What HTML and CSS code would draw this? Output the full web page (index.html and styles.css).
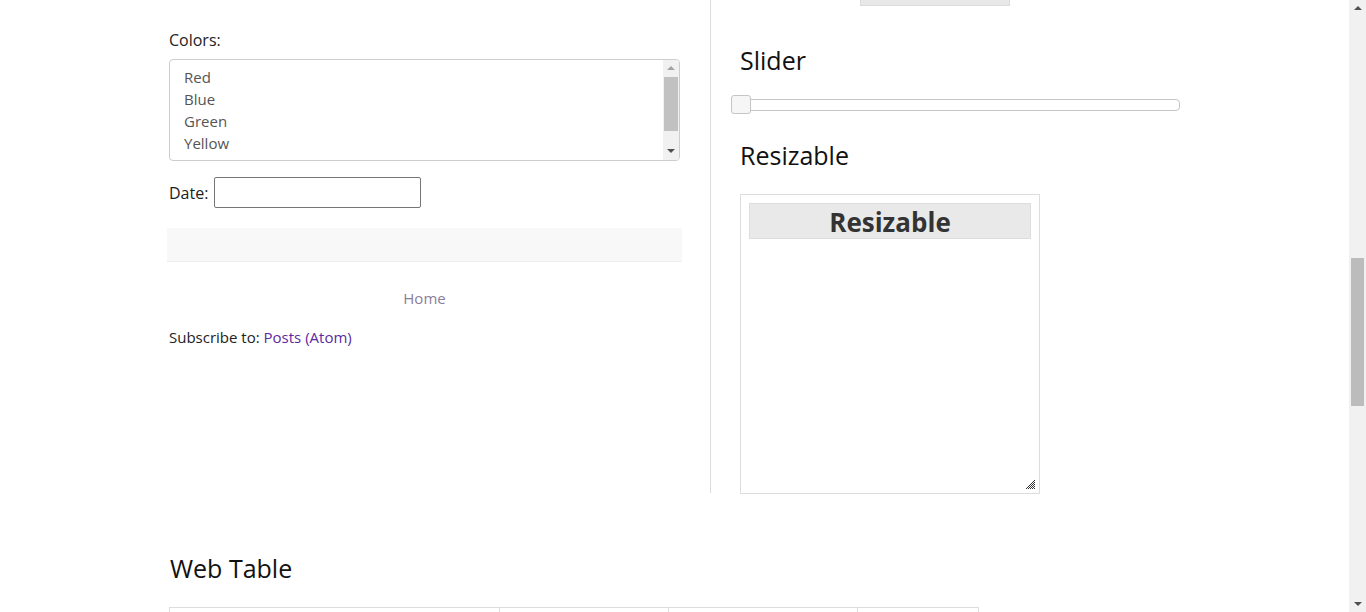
FILE: index.html
```html
<!DOCTYPE html>
<html>
<head>
<meta charset="utf-8">
<link rel="stylesheet" href="styles.css">
</head>
<body>
<div class="page">
  <div class="columns">
    <div class="left">
      <div class="field-label">Colors:</div>
      <div class="listbox">
        <ul class="options">
          <li>Red</li>
          <li>Blue</li>
          <li>Green</li>
          <li>Yellow</li>
          <li>White</li>
        </ul>
        <div class="list-scroll">
          <span class="arrow-up"></span>
          <span class="list-thumb"></span>
          <span class="arrow-down"></span>
        </div>
      </div>
      <div class="date-row">
        <label class="field-label">Date:</label>
        <input class="date-input" type="text">
      </div>
      <div class="band"></div>
      <div class="home-row"><a class="home-link" href="#">Home</a></div>
      <div class="subscribe">Subscribe to: <a class="feed-link" href="#">Posts (Atom)</a></div>
    </div>
    <div class="right">
      <div class="top-stub"></div>
      <h2 class="section-title">Slider</h2>
      <div class="slider">
        <span class="slider-handle"></span>
      </div>
      <h2 class="section-title">Resizable</h2>
      <div class="resizable">
        <h3 class="resizable-header">Resizable</h3>
        <div class="resizable-body"></div>
        <svg class="resize-grip" width="9" height="9" viewBox="0 0 9 9">
          <g fill="#333">
            <rect x="8" y="0" width="1" height="1"/>
            <rect x="7" y="1" width="1" height="1"/>
            <rect x="6" y="2" width="1" height="1"/><rect x="8" y="2" width="1" height="1"/>
            <rect x="5" y="3" width="1" height="1"/><rect x="7" y="3" width="1" height="1"/>
            <rect x="4" y="4" width="1" height="1"/><rect x="6" y="4" width="1" height="1"/><rect x="8" y="4" width="1" height="1"/>
            <rect x="3" y="5" width="1" height="1"/><rect x="5" y="5" width="1" height="1"/><rect x="7" y="5" width="1" height="1"/>
            <rect x="2" y="6" width="1" height="1"/><rect x="4" y="6" width="1" height="1"/><rect x="6" y="6" width="1" height="1"/><rect x="8" y="6" width="1" height="1"/>
            <rect x="1" y="7" width="1" height="1"/><rect x="3" y="7" width="1" height="1"/><rect x="5" y="7" width="1" height="1"/><rect x="7" y="7" width="1" height="1"/>
            <rect x="0" y="8" width="1" height="1"/><rect x="2" y="8" width="1" height="1"/><rect x="4" y="8" width="1" height="1"/><rect x="6" y="8" width="1" height="1"/><rect x="8" y="8" width="1" height="1"/>
          </g>
        </svg>
      </div>
    </div>
  </div>
  <div class="table-section">
    <h2 class="section-title table-title">Web Table</h2>
    <table class="web-table">
      <tr><td class="c1"></td><td class="c2"></td><td class="c3"></td><td class="c4"></td></tr>
    </table>
  </div>
</div>
<div class="page-scroll">
  <span class="arrow-up"></span>
  <div class="page-track"><span class="page-thumb"></span></div>
  <span class="arrow-down"></span>
</div>
</body>
</html>
```

FILE: styles.css
```css
html, body {
  margin: 0;
  padding: 0;
  height: 612px;
  overflow: hidden;
  background: #fff;
}
body {
  display: flex;
  font-family: "Open Sans", "Noto Sans", sans-serif;
  color: #222;
}
.page {
  flex: 1;
  overflow: hidden;
}
.columns {
  display: flex;
  margin-left: 167px;
}
.left {
  width: 543px;
  height: 493px;
  border-right: 1px solid #ddd;
  box-sizing: content-box;
}
.left > * {
  width: 515px;
}
.field-label {
  font-size: 16px;
  line-height: 22px;
  color: #222;
}
.left > .field-label {
  margin: 29px 0 0 2px;
}
.listbox {
  box-sizing: border-box;
  width: 511px !important;
  height: 102px;
  margin: 8px 0 0 2px;
  border: 1px solid #cdcdd0;
  border-radius: 4px;
  display: flex;
  overflow: hidden;
}
.options {
  flex: 1;
  list-style: none;
  margin: 0;
  padding: 6px 0 0 14px;
  font-size: 15px;
  line-height: 22px;
  color: #555;
}
.list-scroll {
  width: 16px;
  background: #f1f1f1;
  display: flex;
  flex-direction: column;
  align-items: center;
}
.list-thumb {
  display: block;
  width: 14px;
  height: 54px;
  background: #c1c1c1;
}
.arrow-up, .arrow-down {
  display: block;
  width: 0;
  height: 0;
  border-left: 4px solid transparent;
  border-right: 4px solid transparent;
}
.list-scroll .arrow-up {
  border-bottom: 4px solid #a3a3a3;
  margin: 6px 0 7px;
}
.list-scroll .arrow-down {
  border-top: 4px solid #505050;
  margin-top: auto;
  margin-bottom: 7px;
}
.date-row {
  display: flex;
  align-items: center;
  margin: 16px 0 0 2px;
}
.date-row .field-label {
  margin-right: 6px;
}
.date-input {
  box-sizing: border-box;
  width: 207px;
  height: 31px;
  border: 1px solid #767676;
  border-radius: 2px;
  margin: 0;
  padding: 0 4px;
}
.band {
  height: 33px;
  margin-top: 20px;
  background: #f8f8f8;
  border-bottom: 1px solid #eee;
}
.home-row {
  text-align: center;
  margin-top: 25px;
  font-size: 15px;
  line-height: 22px;
}
.home-link {
  color: #8b7d9b;
  text-decoration: none;
}
.subscribe {
  margin: 17px 0 0 2px;
  font-size: 15px;
  line-height: 22px;
  color: #222;
}
.feed-link {
  color: #5b2aa0;
  text-decoration: none;
}
.right {
  padding-left: 20px;
  width: 460px;
}
.top-stub {
  margin-left: 129px;
  width: 148px;
  height: 5px;
  background: #e8e8e8;
  border: 1px solid #dcdcdc;
  border-top: none;
}
.section-title {
  font-size: 25px;
  font-weight: normal;
  line-height: 32px;
  margin: 0;
  color: #111;
}
.right .section-title {
  margin-left: 9px;
}
.top-stub + .section-title {
  margin-top: 38px;
}
.slider {
  position: relative;
  box-sizing: border-box;
  width: 449px;
  height: 12px;
  margin-top: 23px;
  border: 1px solid #c5c5c5;
  border-radius: 4px;
  background: #fff;
}
.slider-handle {
  position: absolute;
  left: -1px;
  top: -5px;
  box-sizing: border-box;
  width: 20px;
  height: 19px;
  background: #f6f6f6;
  border: 1px solid #c5c5c5;
  border-radius: 3px;
}
.slider + .section-title {
  margin-top: 28px;
}
.resizable {
  position: relative;
  box-sizing: border-box;
  width: 300px;
  height: 300px;
  margin: 23px 0 0 9px;
  border: 1px solid #ddd;
  padding: 8px;
}
.resizable-header {
  margin: 0;
  box-sizing: border-box;
  height: 36px;
  background: #e9e9e9;
  border: 1px solid #ddd;
  text-align: center;
  font-size: 26px;
  line-height: 36px;
  font-weight: bold;
  color: #333;
}
.resize-grip {
  position: absolute;
  right: 4px;
  bottom: 4px;
}
.table-section {
  margin-left: 169px;
}
.table-title {
  margin: 58px 0 0 1px;
}
.web-table {
  margin-top: 23px;
  border-collapse: collapse;
}
.web-table td {
  border: 1px solid #ddd;
  height: 40px;
  padding: 0;
}
.web-table .c1 { width: 329px; }
.web-table .c2 { width: 168px; }
.web-table .c3 { width: 188px; }
.web-table .c4 { width: 120px; }
.page-scroll {
  width: 17px;
  background: #f1f1f1;
  display: flex;
  flex-direction: column;
  align-items: center;
}
.page-scroll .arrow-up {
  border-bottom: 4px solid #505050;
  margin: 6px 0 0;
}
.page-track {
  flex: 1;
  width: 100%;
  display: flex;
  flex-direction: column;
  align-items: center;
}
.page-thumb {
  display: block;
  width: 13px;
  height: 148px;
  margin-top: 248px;
  background: #bcbcbc;
}
.page-scroll .arrow-down {
  border-top: 4px solid #505050;
  margin-bottom: 6px;
}
```
